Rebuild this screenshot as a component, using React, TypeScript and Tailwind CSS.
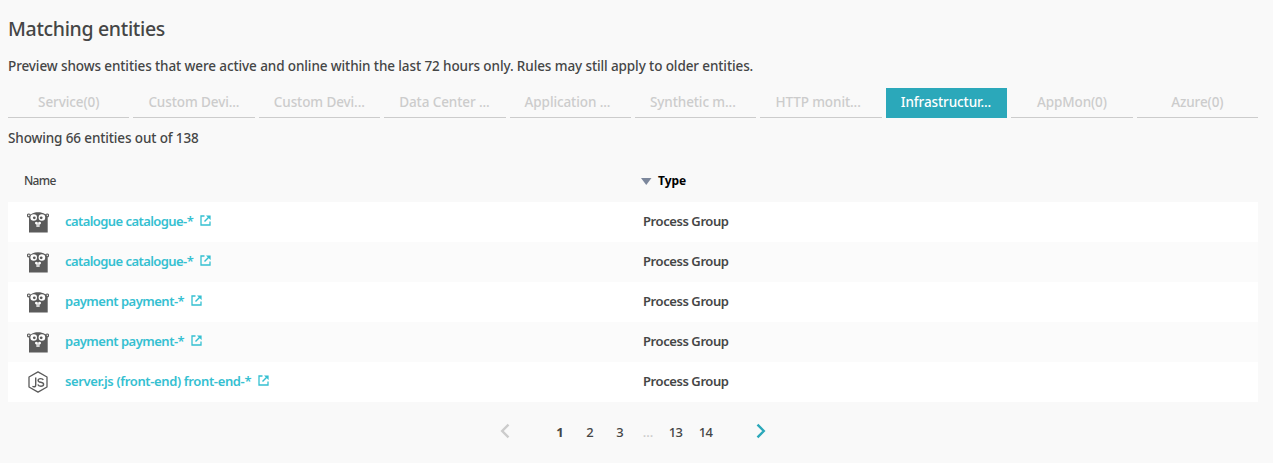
const tabs = [
  'Service(0)',
  'Custom Devi...',
  'Custom Devi...',
  'Data Center ...',
  'Application ...',
  'Synthetic m...',
  'HTTP monit...',
  'Infrastructur...',
  'AppMon(0)',
  'Azure(0)',
];

const rows = [
  { name: 'catalogue catalogue-*', kind: 'go', tracking: 'tracking-[-0.57px]' },
  { name: 'catalogue catalogue-*', kind: 'go', tracking: 'tracking-[-0.57px]' },
  { name: 'payment payment-*', kind: 'go', tracking: 'tracking-[-0.5px]' },
  { name: 'payment payment-*', kind: 'go', tracking: 'tracking-[-0.5px]' },
  { name: 'server.js (front-end) front-end-*', kind: 'node', tracking: 'tracking-[-0.36px]' },
];

function GopherIcon() {
  return (
    <svg width="22" height="21" viewBox="0 0 22 21" className="block">
      <circle cx="1.900" cy="3.400" r="1.400" fill="none" stroke="#5b5b5b" strokeWidth="1.200" />
      <circle cx="20.100" cy="3.400" r="1.400" fill="none" stroke="#5b5b5b" strokeWidth="1.200" />
      <path d="M2 20.400V6.500C2 2.600 5.500.3 11 .3S20.700 2.600 20.700 6.500v13.900Z" fill="#5b5b5b" />
      <circle cx="6.700" cy="5.500" r="3.300" fill="#fff" />
      <circle cx="14.900" cy="5.500" r="3.300" fill="#fff" />
      <circle cx="7.300" cy="5.800" r="1.400" fill="#5b5b5b" />
      <circle cx="14.200" cy="5.800" r="1.400" fill="#5b5b5b" />
      <ellipse cx="11" cy="10.900" rx="3" ry="1.500" fill="#fff" />
      <path d="M9.500 12h3v3h-3Z" fill="#fff" />
      <ellipse cx="11" cy="9.600" rx="1.400" ry=".9" fill="#5b5b5b" />
      <path d="M11 11.400v3.800" stroke="#5b5b5b" strokeWidth=".5" />
    </svg>
  );
}

function NodeIcon() {
  return (
    <svg width="22" height="22" viewBox="0 0 22 22" className="block" fill="none" stroke="#5b5b5b">
      <path d="M11 .9 20 6v10L11 21.100 2 16V6Z" strokeWidth="1.300" strokeLinejoin="round" />
      <path d="M8.700 6.600v7.300c0 1.400-.7 1.900-1.800 1.900-.6 0-1.100-.2-1.500-.4" strokeWidth="1.400" />
      <path d="M16.300 8.900c-.4-.9-1.300-1.300-2.600-1.300-1.600 0-2.600.6-2.600 1.800 0 2.700 5.500 1 5.500 3.900 0 1.300-1 2-2.800 2-1.600 0-2.600-.6-3-1.700" strokeWidth="1.400" />
    </svg>
  );
}

function ExternalIcon() {
  return (
    <svg width="11" height="11" viewBox="0 0 11 11" className="block" fill="none" stroke="#35c0d1">
      <path d="M4.500 1H1v9h9V6.500" strokeWidth="1.300" />
      <path d="M4.500 6.500 9 2" strokeWidth="1.500" />
      <path d="M6 .4h4.600V5Z" fill="#35c0d1" stroke="none" />
    </svg>
  );
}

function Chevron({ direction, color }: { direction: 'left' | 'right'; color: string }) {
  return (
    <svg width="10" height="16" viewBox="0 0 10 16" className="block" fill="none" stroke={color} strokeWidth="2.400">
      <path d={direction === 'left' ? 'M8.500 1.700 2.200 8l6.300 6.300' : 'M1.500 1.700 7.800 8l-6.300 6.300'} />
    </svg>
  );
}

export default function App() {
  return (
    <div className="h-[463px] w-[1273px] overflow-hidden bg-[#f9f9f9] pl-2 pr-[15px] font-['Noto_Sans',sans-serif] text-[13.5px] font-medium text-[#454646]">
      <h1 className="pt-[14px] text-[19.5px] font-medium leading-[30px] tracking-[-0.33px]">Matching entities</h1>
      <p className="mt-[12px] whitespace-nowrap leading-5 tracking-[-0.105px]">
        Preview shows entities that were active and online within the last 72 hours only. Rules may still apply to older entities.
      </p>
      <div className="mt-3 grid grid-cols-10 gap-1">
        {tabs.map((tab, i) => {
          const align = tab.endsWith('...') ? 'pl-[15px] text-left' : 'text-center';
          const tone = i === 7 ? 'bg-[#2ba8ba] text-white' : 'border-b border-[#cccccc] text-[#cccccc]';
          return (
            <div key={i} className={`h-[30px] whitespace-nowrap leading-[28px] tracking-[-0.1px] ${align} ${tone}`}>
              {tab}
            </div>
          );
        })}
      </div>
      <p className="mt-[10px] leading-5 tracking-[-0.13px]">Showing 66 entities out of 138</p>
      <div className="mt-[14px] flex h-10 items-center pb-[2px] text-[12px]">
        <div className="w-[633px] pl-4 tracking-[-0.7px]">Name</div>
        <div className="flex items-center font-bold text-black">
          <svg width="11" height="7" viewBox="0 0 11 7" className="mr-[6px] block">
            <path d="M0 0h10.500L5.250 7Z" fill="#7c879c" />
          </svg>
          Type
        </div>
      </div>
      <div>
        {rows.map((row, i) => (
          <div key={i} className="flex h-10 items-center bg-white even:bg-[#fbfbfb]">
            <div className="flex w-[635px] items-center">
              <div className="w-[57px] pl-[19px]">{row.kind === 'go' ? <GopherIcon /> : <NodeIcon />}</div>
              <span className={`text-[13px] font-semibold text-[#35c0d1] ${row.tracking}`}>{row.name}</span>
              <span className="mb-[3px] ml-[7px]">
                <ExternalIcon />
              </span>
            </div>
            <div className="text-[13px] font-semibold tracking-[-0.42px]">Process Group</div>
          </div>
        ))}
      </div>
      <div className="mt-[18px] flex h-6 items-center pl-[492px] text-[13px] tracking-[-0.7px]">
        <div className="mb-[3px] w-[45px]">
          <Chevron direction="left" color="#cccccc" />
        </div>
        <span className="w-[30px] pt-0.5 pr-px text-center font-bold">1</span>
        <span className="w-[30px] pt-0.5 pr-px text-center">2</span>
        <span className="w-[30px] pt-0.5 pr-px text-center">3</span>
        <span className="w-[26px] pt-0.5 text-center tracking-normal text-[#cccccc]">...</span>
        <span className="w-[30px] pt-0.5 pr-px text-center">13</span>
        <span className="w-[30px] pt-0.5 pr-px text-center">14</span>
        <div className="mb-[3px] ml-[35px]">
          <Chevron direction="right" color="#2ba8ba" />
        </div>
      </div>
    </div>
  );
}
